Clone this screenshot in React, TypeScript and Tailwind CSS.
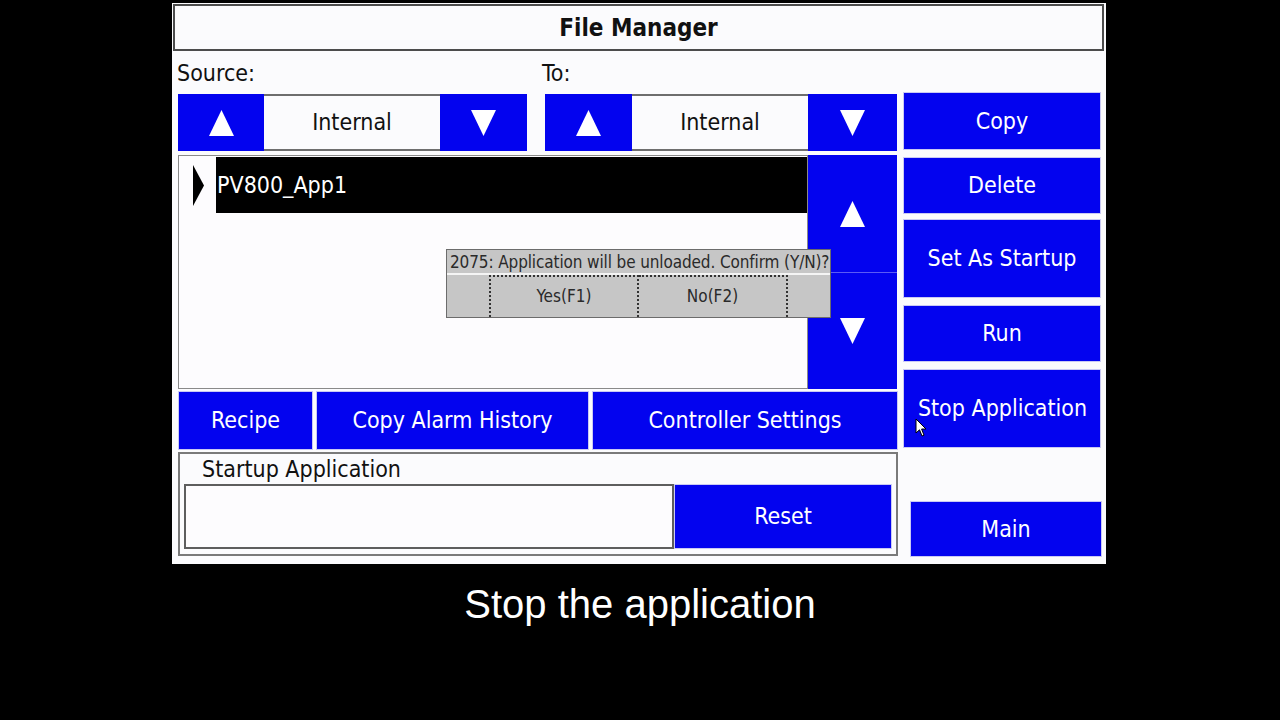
import React from 'react';

const hmiFont = { fontFamily: '"DejaVu Sans Condensed", "DejaVu Sans", sans-serif' };

type Dir = 'up' | 'down' | 'right';

const Tri = ({ dir, className = 'w-[25px] h-[26px]', fill = '#fff' }: { dir: Dir; className?: string; fill?: string }) => {
  const pts = dir === 'up' ? '12.5,0 25,26 0,26' : dir === 'down' ? '0,0 25,0 12.5,26' : '0,0 25,13 0,26';
  return (
    <svg viewBox="0 0 25 26" preserveAspectRatio="none" className={className}>
      <polygon points={pts} fill={fill} />
    </svg>
  );
};

const BlueBtn = ({ label, className }: { label: string; className: string }) => (
  <div className={`flex items-center justify-center bg-[#0303ef] text-white text-[23px] border border-[#c9c9f4] ${className}`}>
    {label}
  </div>
);

const Selector = ({ upW, midW, downW }: { upW: string; midW: string; downW: string }) => (
  <div className="flex h-[57px]">
    <div className={`flex items-center justify-center bg-[#0303ef] ${upW}`}>
      <Tri dir="up" />
    </div>
    <div className={`flex items-center justify-center bg-[#fbfbfd] border-y-2 border-[#6e6e6e] text-[23px] text-[#111] ${midW}`}>
      Internal
    </div>
    <div className={`flex items-center justify-center bg-[#0303ef] ${downW}`}>
      <Tri dir="down" />
    </div>
  </div>
);

const Cursor = () => (
  <svg viewBox="0 0 12 20" className="w-[12px] h-[20px]">
    <path d="M1 1 L1 15 L4.5 11.8 L7 18 L9 17.2 L6.6 11 L11 11 Z" fill="#fff" stroke="#000" strokeWidth="1" strokeLinejoin="round" />
  </svg>
);

export default function App() {
  return (
    <div className="w-[1280px] h-[720px] bg-black overflow-hidden">
      <div className="ml-[172px] pt-[3px]">
        <div className="relative w-[934px] h-[561px] bg-[#fbfbfd] pt-[1px]" style={hmiFont}>
          {/* title */}
          <div className="ml-[1px] w-[931px] h-[47px] border-2 border-[#4c4c4c] flex items-center justify-center text-[24px] font-bold text-[#111]">
            File Manager
          </div>

          <div className="flex">
            {/* left side */}
            <div className="ml-[6px] w-[720px] flex flex-col">
              <div className="h-[43px] flex items-center text-[23px] text-[#111] pt-[1px]">
                <span className="ml-[-1px] w-[365px]">Source:</span>
                <span>To:</span>
              </div>
              <div className="flex">
                <Selector upW="w-[86px]" midW="w-[176px]" downW="w-[87px]" />
                <div className="w-[18px]" />
                <Selector upW="w-[87px]" midW="w-[176px]" downW="w-[89px]" />
              </div>

              {/* list + scroll */}
              <div className="mt-[4px] flex h-[234px]">
                <div className="relative w-[630px] bg-[#fdfcfe] border border-[#8a8a8a] pt-[1px]">
                  <div className="flex h-[56px]">
                    <div className="w-[37px] flex items-center pl-[14px]">
                      <Tri dir="right" fill="#000" className="w-[11px] h-[41px]" />
                    </div>
                    <div className="flex-1 bg-black text-white text-[23px] flex items-center pl-[1px]">PV800_App1</div>
                  </div>

                  {/* confirm dialog */}
                  <div className="absolute left-[267px] top-[93px] w-[385px] h-[69px] bg-[#c6c6c6] border border-[#6c6c6c] flex flex-col text-[#2a2a2a]">
                    <div className="h-[25px] flex items-center pl-[3px] pt-[2px] text-[17px] tracking-[-0.12px] border-b-2 border-[#f4f4f4] whitespace-nowrap">
                      2075: Application will be unloaded. Confirm (Y/N)?
                    </div>
                    <div className="flex flex-1">
                      <div className="w-[42px]" />
                      <div className="w-[150px] flex items-center justify-center text-[17px] border-x-2 border-t-2 border-dotted border-[#333]">
                        Yes(F1)
                      </div>
                      <div className="w-[149px] flex items-center justify-center text-[17px] border-r-2 border-t-2 border-dotted border-[#333]">
                        No(F2)
                      </div>
                    </div>
                  </div>
                </div>
                <div className="w-[89px] flex flex-col bg-[#0303ef]">
                  <div className="h-[117px] flex items-center justify-center">
                    <Tri dir="up" />
                  </div>
                  <div className="flex-1 flex items-center justify-center border-t border-[#5b5bf5]">
                    <Tri dir="down" />
                  </div>
                </div>
              </div>

              {/* bottom buttons */}
              <div className="mt-[2px] flex gap-[3px] h-[59px]">
                <BlueBtn label="Recipe" className="w-[135px]" />
                <BlueBtn label="Copy Alarm History" className="w-[273px]" />
                <BlueBtn label="Controller Settings" className="w-[306px]" />
              </div>

              {/* startup application group */}
              <div className="mt-[2px] h-[104px] border-2 border-[#7a7a7a] flex flex-col">
                <div className="h-[30px] flex items-center pl-[22px] text-[23px] text-[#111]">Startup Application</div>
                <div className="flex ml-[4px] mr-[4px] h-[65px]">
                  <div className="w-[490px] bg-[#fdfcfe] border-2 border-[#5e5e5e]" />
                  <BlueBtn label="Reset" className="flex-1" />
                </div>
              </div>
            </div>

            {/* right column */}
            <div className="ml-[5px] w-[198px] flex flex-col">
              <BlueBtn label="Copy" className="mt-[41px] h-[58px]" />
              <BlueBtn label="Delete" className="mt-[7px] h-[57px]" />
              <BlueBtn label="Set As Startup" className="mt-[5px] h-[79px]" />
              <BlueBtn label="Run" className="mt-[7px] h-[57px]" />
              <div className="relative">
                <BlueBtn label="Stop Application" className="mt-[7px] h-[79px] pl-[1px]" />
                <div className="absolute left-[12px] top-[56px]">
                  <Cursor />
                </div>
              </div>
              <BlueBtn label="Main" className="mt-[53px] ml-[7px] w-[192px] h-[56px]" />
            </div>
          </div>
        </div>

        <div
          className="ml-[-172px] w-[1280px] mt-[18px] text-center text-white text-[40px] leading-[45px]"
          style={{ fontFamily: '"Liberation Sans", Arial, sans-serif' }}
        >
          Stop the application
        </div>
      </div>
    </div>
  );
}
